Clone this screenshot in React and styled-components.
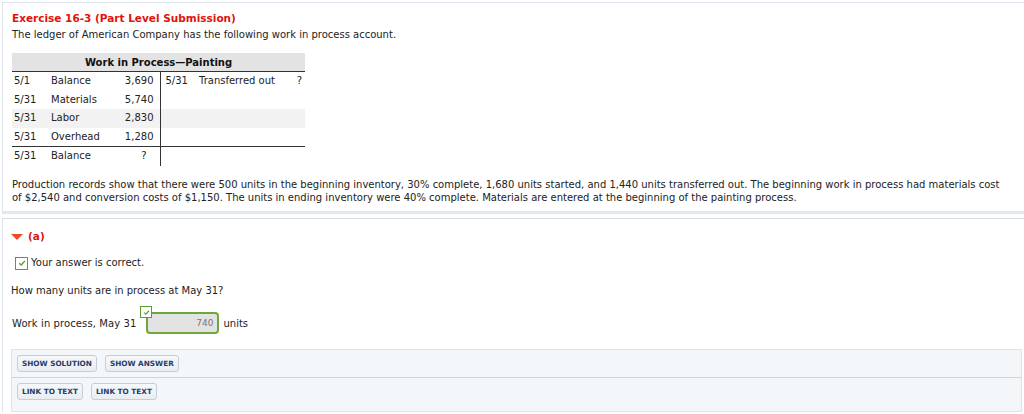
import React from "react";
import styled, { createGlobalStyle } from "styled-components";

const Global = createGlobalStyle`
  html, body { margin: 0; padding: 0; background: #fff; }
  body { font-family: "DejaVu Sans", Verdana, sans-serif; font-size: 10px; color: #222; overflow: hidden; }
`;

const Page = styled.div`
  padding: 2px 0 0 2px;
  width: 1022px;
`;

const Panel = styled.section`
  border: 1px solid #dfe5ec;
  border-right: none;
  border-bottom: 3px solid #e3e8ee;
  padding: 8px 8px 7px 9px;
`;

const Title = styled.h1`
  margin: 0;
  font-size: 10.5px;
  line-height: 14px;
  font-weight: bold;
  color: #e3120b;
`;

const Text = styled.p`
  margin: ${(p) => p.$m || "3px 0 0"};
  line-height: ${(p) => p.$lh || "14px"};
  max-width: ${(p) => p.$w || "none"};
  font-size: 10px;
  color: #222;
`;

const Ledger = styled.table`
  margin-top: 11px;
  width: 293px;
  border-collapse: collapse;
  table-layout: fixed;
  font-size: 10px;
  color: #222;
`;

const HeadCell = styled.th`
  background: #e3e3e3;
  height: 18px;
  padding: 0;
  font-weight: bold;
  text-align: center;
  border-bottom: 1px solid #333;
  color: #111;
`;

const Row = styled.tr`
  background: ${(p) => (p.$shade ? "#f2f2f2" : "transparent")};
  border-top: ${(p) => (p.$total ? "1px solid #333" : "none")};
`;

const Cell = styled.td`
  height: ${(p) => (p.$total ? "19px" : "18.5px")};
  padding: 0 ${(p) => p.$pr || 0}px 0 ${(p) => p.$pl || 0}px;
  text-align: ${(p) => p.$align || "left"};
  border-left: ${(p) => (p.$divider ? "1px solid #333" : "none")};
  white-space: nowrap;
  vertical-align: ${(p) => (p.$total ? "top" : "middle")};
  line-height: 18px;
`;

const Panel2 = styled.section`
  margin-top: 4px;
  border-top: 1px solid #d5dce4;
  border-left: 1px solid #dfe5ec;
  padding: 10px 0 0 8px;
`;

const PartHead = styled.div`
  display: flex;
  align-items: center;
  gap: 5px;
  font-weight: bold;
  color: #d8170f;
  font-size: 10.5px;
  line-height: 14px;
`;

const Caret = styled.span`
  width: 0;
  height: 0;
  border-left: 6px solid transparent;
  border-right: 6px solid transparent;
  border-top: 6px solid #ef4a24;
  margin-top: 1px;
`;

const CorrectLine = styled.div`
  display: flex;
  align-items: center;
  gap: 3px;
  margin: 13px 0 0 4px;
  line-height: 14px;
`;

const Check = styled.span`
  box-sizing: border-box;
  display: inline-flex;
  align-items: center;
  justify-content: center;
  width: ${(p) => p.$size}px;
  height: ${(p) => p.$size}px;
  border: 1.5px solid #5a9e2f;
  background: #fff;
`;

const CheckMark = ({ size }) => (
  <Check $size={size}>
    <svg width={size - 5} height={size - 5} viewBox="0 0 10 10">
      <path d="M1.5 5.2 L4 7.5 L8.6 2.5" fill="none" stroke="#5a9e2f" strokeWidth="1.6" />
    </svg>
  </Check>
);

const AnswerRow = styled.div`
  display: flex;
  align-items: center;
  gap: 4px;
  margin-top: 14px;
  height: 22px;
  padding-left: 1px;
`;

const Label = styled.span`
  letter-spacing: 0.1px;
`;

const InputWrap = styled.div`
  position: relative;
  margin-left: 6px;
`;

const Field = styled.div`
  box-sizing: border-box;
  width: 73px;
  height: 22px;
  border: 2px solid #6aa93a;
  border-radius: 4px;
  background: #e3e3e3;
  color: #777;
  font-size: 9px;
  text-align: right;
  padding-right: 4px;
  line-height: 18px;
`;

const Badge = styled.span`
  position: absolute;
  top: -6px;
  left: -6px;
  line-height: 0;
`;

const Actions = styled.div`
  margin: 15px 2px 0 0;
  border: 1px solid #dde3ea;
  background: #f4f7fa;
`;

const ActionRow = styled.div`
  display: flex;
  gap: 8px;
  padding: ${(p) => p.$pad};
  border-top: ${(p) => (p.$first ? "none" : "1px solid #cdd5df")};
`;

const Button = styled.button`
  font-family: "DejaVu Sans", Verdana, sans-serif;
  font-size: 7.3px;
  font-weight: bold;
  color: #263d6c;
  background: linear-gradient(#f6f8fa, #e9edf2);
  border: 1px solid #c6cdd7;
  border-radius: 3px;
  height: 17px;
  padding: 0 4px;
`;

const rows = [
  { d: "5/1", l: "Balance", a: "3,690", rd: "5/31", rl: "Transferred out", ra: "?" },
  { d: "5/31", l: "Materials", a: "5,740" },
  { d: "5/31", l: "Labor", a: "2,830", shade: true },
  { d: "5/31", l: "Overhead", a: "1,280" },
];

export default function App() {
  return (
    <>
      <Global />
      <Page>
        <Panel>
          <Title>Exercise 16-3 (Part Level Submission)</Title>
          <Text>The ledger of American Company has the following work in process account.</Text>
          <Ledger>
            <colgroup>
              <col style={{ width: 37 }} />
              <col style={{ width: 64 }} />
              <col style={{ width: 47 }} />
              <col style={{ width: 39 }} />
              <col style={{ width: 90 }} />
              <col style={{ width: 16 }} />
            </colgroup>
            <thead>
              <tr>
                <HeadCell colSpan={6}>Work in Process—Painting</HeadCell>
              </tr>
            </thead>
            <tbody>
              {rows.map((r, i) => (
                <Row key={i} $shade={r.shade}>
                  <Cell $pl={2}>{r.d}</Cell>
                  <Cell $pl={2}>{r.l}</Cell>
                  <Cell $align="right" $pr={6}>{r.a}</Cell>
                  <Cell $divider $pl={5}>{r.rd || ""}</Cell>
                  <Cell>{r.rl || ""}</Cell>
                  <Cell $align="right" $pr={3}>{r.ra || ""}</Cell>
                </Row>
              ))}
              <Row $total>
                <Cell $total $pl={2}>5/31</Cell>
                <Cell $total $pl={2}>Balance</Cell>
                <Cell $total $align="right" $pr={13}>?</Cell>
                <Cell $total $divider />
                <Cell $total />
                <Cell $total />
              </Row>
            </tbody>
          </Ledger>
          <Text $m="13px 0 0" $lh="12.5px" $w="990px">
            Production records show that there were 500 units in the beginning inventory, 30% complete, 1,680 units started, and 1,440 units transferred out. The beginning work in process had materials cost of $2,540 and conversion costs of $1,150. The units in ending inventory were 40% complete. Materials are entered at the beginning of the painting process.
          </Text>
        </Panel>
        <Panel2>
          <PartHead>
            <Caret />
            <span>(a)</span>
          </PartHead>
          <CorrectLine>
            <CheckMark size={13} />
            <span>Your answer is correct.</span>
          </CorrectLine>
          <Text $m="14px 0 0">How many units are in process at May 31?</Text>
          <AnswerRow>
            <Label>Work in process, May 31</Label>
            <InputWrap>
              <Badge>
                <CheckMark size={12} />
              </Badge>
              <Field>740</Field>
            </InputWrap>
            <span>units</span>
          </AnswerRow>
          <Actions>
            <ActionRow $first $pad="5px 5px 5px">
              <Button>SHOW SOLUTION</Button>
              <Button>SHOW ANSWER</Button>
            </ActionRow>
            <ActionRow $pad="5px 5px 11px">
              <Button>LINK TO TEXT</Button>
              <Button>LINK TO TEXT</Button>
            </ActionRow>
          </Actions>
        </Panel2>
      </Page>
    </>
  );
}
